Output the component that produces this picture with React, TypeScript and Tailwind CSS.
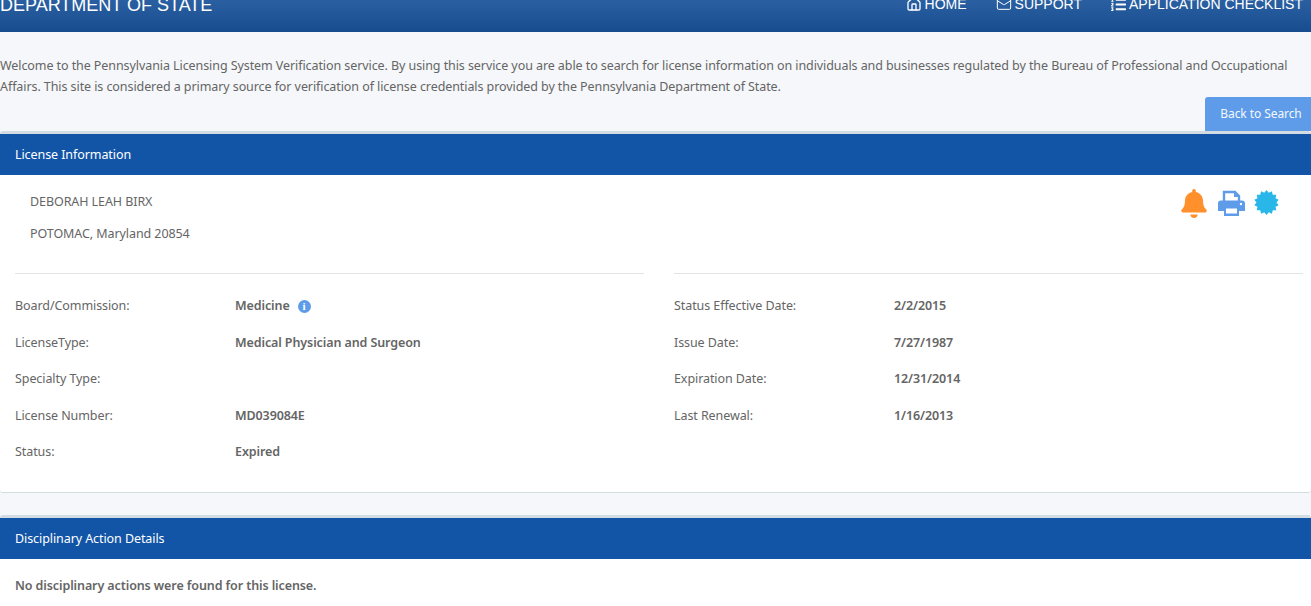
import { Home, Mail } from 'lucide-react';
import { FaBell, FaListOl } from 'react-icons/fa';

const leftRows = [
  ['Board/Commission:', 'Medicine'],
  ['LicenseType:', 'Medical Physician and Surgeon'],
  ['Specialty Type:', ''],
  ['License Number:', 'MD039084E'],
  ['Status:', 'Expired'],
];

const rightRows = [
  ['Status Effective Date:', '2/2/2015'],
  ['Issue Date:', '7/27/1987'],
  ['Expiration Date:', '12/31/2014'],
  ['Last Renewal:', '1/16/2013'],
];

function InfoRow({ label, value }: { label: string; value: string }) {
  return (
    <div className="flex h-[36.5px] items-center">
      <div className="w-[220px]">{label}</div>
      <div className="flex items-center font-semibold tracking-[-0.1px]">
        {value}
        {value === 'Medicine' && (
          <span className="ml-[8px] flex h-[13px] w-[13px] items-center justify-center rounded-full bg-[#5e9cea] font-['Liberation_Serif',serif] text-[11px] font-bold text-white">
            i
          </span>
        )}
      </div>
    </div>
  );
}

function PrinterIcon() {
  return (
    <svg width="27" height="26" viewBox="0 0 27 26">
      <path d="M6 11V2h11l4 4v5" fill="none" stroke="#5e9cea" strokeWidth="2.4" />
      <path d="M17 2v4h4" fill="none" stroke="#5e9cea" strokeWidth="2" />
      <path d="M3 10.5h21a3 3 0 0 1 3 3V21h-6v5H6v-5H0v-7.5a3 3 0 0 1 3-3z" fill="#5e9cea" />
      <rect x="8" y="18.5" width="11" height="5" fill="#ffffff" />
      <circle cx="23" cy="14" r="1.2" fill="#ffffff" />
    </svg>
  );
}

function Badge() {
  const points: string[] = [];
  for (let i = 0; i < 28; i++) {
    const r = i % 2 === 0 ? 12.5 : 10;
    const a = (i * Math.PI) / 14;
    points.push(`${12.5 + r * Math.sin(a)},${12.5 - r * Math.cos(a)}`);
  }
  return (
    <svg width="25" height="25" viewBox="0 0 25 25">
      <polygon points={points.join(' ')} fill="#29b6e8" />
    </svg>
  );
}

export default function App() {
  return (
    <div className="flex h-[606px] flex-col overflow-hidden bg-[#f5f7fa] font-['Noto_Sans',sans-serif] text-[12.5px] tracking-[-0.08px] text-[#656565]">
      <header className="flex h-[32px] shrink-0 items-start justify-between overflow-hidden bg-gradient-to-b from-[#2a60a2] to-[#174d8e] font-['Liberation_Sans',sans-serif] text-[14px] tracking-normal text-white">
        <div className="mt-[-5px] text-[18px] leading-[20px]">DEPARTMENT OF STATE</div>
        <nav className="mt-[-6px] flex items-center pr-[8px] leading-[20px]">
          <span className="flex items-center">
            <Home size={16} strokeWidth={2} />
            <span className="ml-[3px]">HOME</span>
          </span>
          <span className="ml-[29px] flex items-center">
            <Mail size={16} strokeWidth={1.5} />
            <span className="ml-[3px]">SUPPORT</span>
          </span>
          <span className="ml-[29px] flex items-center">
            <FaListOl size={15} />
            <span className="ml-[3px]">APPLICATION CHECKLIST</span>
          </span>
        </nav>
      </header>

      <p className="mt-[23px] leading-[21px]">
        Welcome to the Pennsylvania Licensing System Verification service. By using this service you are able to search for license information on individuals and businesses regulated by the Bureau of Professional and Occupational Affairs. This site is considered a primary source for verification of license credentials provided by the Pennsylvania Department of State.
      </p>

      <div className="flex justify-end">
        <button className="h-[34px] w-[106px] rounded-tl-[3px] bg-[#5e9cea] pl-[6px] text-[12px] text-[#f5f7fa]">Back to Search</button>
      </div>

      <section className="h-[362px] shrink-0 rounded-[3px] border-t-[3px] border-b border-[#d3dbe3] bg-white">
        <div className="flex h-[41px] items-center bg-[#1254a6] px-[15px] pt-[1px] text-white">License Information</div>
        <div className="pl-[15px] pr-[8px]">
          <div className="flex justify-between">
            <div className="pl-[15px] pt-[11px]">
              <div className="leading-[32px]">DEBORAH LEAH BIRX</div>
              <div className="leading-[32px]">POTOMAC, Maryland 20854</div>
            </div>
            <div className="flex items-start pr-[24px] pt-[14px]">
              <FaBell className="h-[29px] w-[26px]" color="#ff902b" />
              <span className="ml-[11px] mt-[1px]">
                <PrinterIcon />
              </span>
              <span className="ml-[9px] mt-[1px]">
                <Badge />
              </span>
            </div>
          </div>
          <div className="mt-[23px] grid grid-cols-2 gap-[30px]">
            <div className="border-t border-[#e4e4e4] pt-[14.4px]">
              {leftRows.map(([label, value]) => (
                <InfoRow key={label} label={label} value={value} />
              ))}
            </div>
            <div className="border-t border-[#e4e4e4] pt-[14.4px]">
              {rightRows.map(([label, value]) => (
                <InfoRow key={label} label={label} value={value} />
              ))}
            </div>
          </div>
        </div>
      </section>

      <section className="mt-[22px] flex-1 rounded-t-[3px] border-t-[3px] border-[#d3dbe3] bg-white">
        <div className="flex h-[41px] items-center bg-[#1254a6] px-[15px] pt-[1px] text-white">Disciplinary Action Details</div>
        <div className="px-[15px] pt-[18px] font-semibold tracking-[-0.1px]">No disciplinary actions were found for this license.</div>
      </section>
    </div>
  );
}
